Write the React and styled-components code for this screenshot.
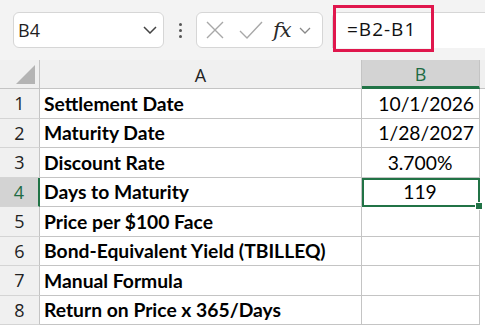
import React from "react";
import styled, { createGlobalStyle } from "styled-components";

const Global = createGlobalStyle`
  html, body { margin: 0; padding: 0; background: #fff; overflow: hidden; }
  body { font-family: "Open Sans", "Liberation Sans", sans-serif; }
`;

const Page = styled.div`
  width: 485px;
  height: 328px;
  background: #fff;
`;

const Toolbar = styled.div`
  height: 60px;
  background: #f3f3f3;
  display: flex;
  align-items: center;
  padding-left: 13px;
  box-sizing: border-box;
`;

const NameBox = styled.div`
  width: 151px;
  height: 36px;
  box-sizing: border-box;
  background: #fff;
  border: 1px solid #d6d6d6;
  border-radius: 6px;
  display: flex;
  align-items: center;
  justify-content: space-between;
  padding: 0 6px 0 4px;
  font-size: 18px;
  color: #1f1f1f;
`;

const Dots = styled.div`
  width: 32px;
  display: flex;
  flex-direction: column;
  align-items: center;
  gap: 3px;
  span {
    width: 3px;
    height: 3px;
    border-radius: 50%;
    background: #555;
  }
`;

const ActionBox = styled.div`
  width: 127px;
  height: 36px;
  box-sizing: border-box;
  background: #fff;
  border: 1px solid #d6d6d6;
  border-radius: 6px;
  display: flex;
  align-items: center;
  padding-left: 8px;
`;

const Fx = styled.span`
  font-family: "DejaVu Serif", "Liberation Serif", serif;
  font-style: italic;
  font-size: 21px;
  color: #2a2a2a;
  margin-left: 10px;
  letter-spacing: -1px;
`;

const FormulaField = styled.div`
  position: relative;
  flex: 1;
  height: 36px;
  margin-left: 9px;
  background: #fff;
  border-left: 1px solid #d6d6d6;
  border-top: 1px solid #d6d6d6;
  border-top-left-radius: 6px;
  box-sizing: border-box;
`;

const Highlight = styled.div`
  position: absolute;
  left: 0;
  top: -8px;
  width: 101px;
  height: 47px;
  box-sizing: border-box;
  border: 3px solid #e0174d;
  display: flex;
  align-items: center;
  padding-left: 11px;
  font-size: 19px;
  color: #111;
  letter-spacing: 1px;
`;

const Sheet = styled.div`
  display: grid;
  grid-template-columns: 40px 322px 118px 1fr;
  grid-template-rows: 29px repeat(8, 29.5px);
`;

const ColHead = styled.div`
  background: ${(p) => (p.$active ? "#d3d3d3" : "#f0f0f0")};
  color: ${(p) => (p.$active ? "#1e6b43" : "#222")};
  border-right: ${(p) => (p.$last ? "none" : "1px solid #c4c4c4")};
  border-bottom: ${(p) => (p.$active ? "3px solid #217346" : "1px solid #c4c4c4")};
  box-sizing: border-box;
  display: flex;
  align-items: center;
  justify-content: center;
  font-size: 18px;
  padding-top: 2px;
  position: relative;
`;

const Corner = styled(ColHead)`
  svg { position: absolute; left: 16px; bottom: 4px; }
`;

const RowHead = styled.div`
  background: ${(p) => (p.$active ? "#d3d3d3" : "#f0f0f0")};
  color: ${(p) => (p.$active ? "#1e6b43" : "#222")};
  border-right: ${(p) => (p.$active ? "2px solid #217346" : "1px solid #c4c4c4")};
  border-bottom: 1px solid #d4d4d4;
  box-sizing: border-box;
  display: flex;
  align-items: center;
  justify-content: center;
  font-size: 18px;
`;

const Cell = styled.div`
  border-right: 1px solid #c4c4c4;
  border-bottom: 1px solid #c4c4c4;
  box-sizing: border-box;
  display: flex;
  align-items: center;
  justify-content: ${(p) => p.$align || "flex-start"};
  padding: 0 5px 0 4px;
  font-family: "Lato", "Liberation Sans", sans-serif;
  font-weight: ${(p) => (p.$bold ? 700 : 400)};
  font-size: 19.3px;
  color: #000;
  position: relative;
`;

const Blank = styled.div``;

const Selected = styled(Cell)`
  outline: 2px solid #217346;
  outline-offset: -2px;
  &::after {
    content: "";
    position: absolute;
    right: -4px;
    bottom: -4px;
    width: 6px;
    height: 6px;
    background: #217346;
    border: 1px solid #fff;
    z-index: 2;
  }
`;

const rows = [
  ["Settlement Date", "10/1/2026", "flex-end"],
  ["Maturity Date", "1/28/2027", "flex-end"],
  ["Discount Rate", "3.700%", "center"],
  ["Days to Maturity", "119", "center"],
  ["Price per $100 Face", "", "flex-end"],
  ["Bond-Equivalent Yield (TBILLEQ)", "", "flex-end"],
  ["Manual Formula", "", "flex-end"],
  ["Return on Price x 365/Days", "", "flex-end"],
];

export default function App() {
  return (
    <Page>
      <Global />
      <Toolbar>
        <NameBox>
          <span>B4</span>
          <svg width="14" height="8" viewBox="0 0 14 8">
            <path d="M1 1l6 6 6-6" fill="none" stroke="#444" strokeWidth="1.5" />
          </svg>
        </NameBox>
        <Dots>
          <span />
          <span />
          <span />
        </Dots>
        <ActionBox>
          <svg width="20" height="20" viewBox="0 0 20 20">
            <path d="M2 2l16 16M18 2L2 18" stroke="#a8a8a8" strokeWidth="1.4" fill="none" />
          </svg>
          <svg width="24" height="20" viewBox="0 0 24 20" style={{ marginLeft: 14 }}>
            <path d="M1 11l7 7L23 2" stroke="#a8a8a8" strokeWidth="1.4" fill="none" />
          </svg>
          <Fx>fx</Fx>
          <svg width="12" height="7" viewBox="0 0 12 7" style={{ marginLeft: 8 }}>
            <path d="M1 1l5 5 5-5" fill="none" stroke="#888" strokeWidth="1.3" />
          </svg>
        </ActionBox>
        <FormulaField>
          <Highlight>=B2-B1</Highlight>
        </FormulaField>
      </Toolbar>
      <Sheet>
        <Corner>
          <svg width="19" height="19" viewBox="0 0 19 19">
            <path d="M19 0V19H0z" fill="#b4b4b4" />
          </svg>
        </Corner>
        <ColHead>A</ColHead>
        <ColHead $active>B</ColHead>
        <ColHead $last />
        {rows.map(([label, value, align], i) => (
          <React.Fragment key={label}>
            <RowHead $active={i === 3}>{i + 1}</RowHead>
            <Cell $bold>{label}</Cell>
            {i === 3 ? (
              <Selected $align={align}>{value}</Selected>
            ) : (
              <Cell $align={align}>{value}</Cell>
            )}
            <Blank />
          </React.Fragment>
        ))}
      </Sheet>
    </Page>
  );
}
